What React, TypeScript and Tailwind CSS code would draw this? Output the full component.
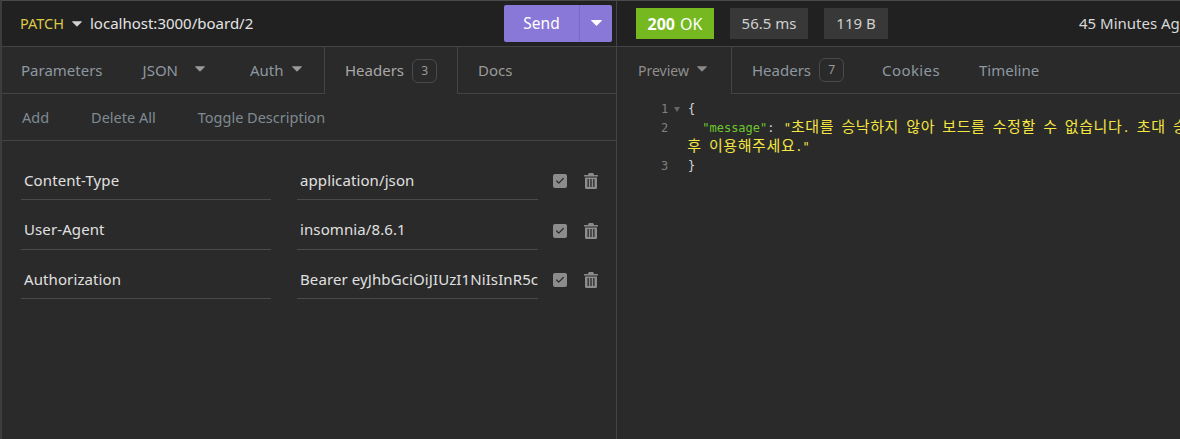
import { Check } from "lucide-react"

const font = { fontFamily: '"Noto Sans", sans-serif' }

function Caret({ className }: { className: string }) {
  return (
    <svg viewBox="0 0 11 6" className={className} fill="currentColor">
      <path d="M0 0.5 Q0 0 0.6 0 H10.4 Q11 0 11 0.5 L6 5.6 Q5.5 6 5 5.6 Z" />
    </svg>
  )
}

function Badge({ children }: { children: string }) {
  return (
    <span className="ml-[8px] flex h-[24px] w-[25px] shrink-0 items-center justify-center rounded-[6px] border border-[#4a4a4a] text-[12px] text-[#9a9a9a]">
      {children}
    </span>
  )
}

// body is filled, the three bars are cut out in the page colour
function TrashIcon() {
  return (
    <svg viewBox="0 0 14 16" className="ml-[17px] h-[16px] w-[14px] text-[#8c8c8c]" fill="currentColor">
      <path d="M4.5 0.5 Q4.7 0 5.2 0 H8.8 Q9.3 0 9.5 0.5 L10 2 H13.5 Q14 2 14 2.5 V3.5 H0 V2.5 Q0 2 0.5 2 H4 Z" />
      <path d="M1 4.5 H13 V14.5 Q13 16 11.5 16 H2.5 Q1 16 1 14.5 Z" />
      <path d="M3.5 6 H4.8 V14 H3.5 Z M6.35 6 H7.65 V14 H6.35 Z M9.2 6 H10.5 V14 H9.2 Z" fill="#2a2a2a" />
    </svg>
  )
}

const headers = [
  { name: "Content-Type", value: "application/json" },
  { name: "User-Agent", value: "insomnia/8.6.1" },
  { name: "Authorization", value: "Bearer eyJhbGciOiJIUzI1NiIsInR5c" },
]

function HeaderRow({ name, value }: { name: string; value: string }) {
  return (
    <div className="flex h-[49.5px] items-start tracking-[0.1px]">
      <div className="ml-[19px] flex h-[39px] w-[250px] items-center border-b border-[#4a4a4a] pl-[3px] text-[15px] text-[#e0e0e0]">
        {name}
      </div>
      <div className="ml-[26px] flex h-[39px] w-[241px] items-center overflow-hidden border-b border-[#4a4a4a] pl-[3px] text-[15px] whitespace-nowrap text-[#e0e0e0]">
        {value}
      </div>
      <div className="ml-[15px] flex h-[39px] items-center pt-[1px]">
        <span className="flex h-[14px] w-[14px] items-center justify-center rounded-[2px] bg-[#8c8c8c]">
          <Check className="h-[10px] w-[10px] text-[#2a2a2a]" strokeWidth={3} />
        </span>
        <TrashIcon />
      </div>
    </div>
  )
}

function K({ children }: { children: string }) {
  return <span className="text-[15px] tracking-[0.6px]">{children}</span>
}

export default function App() {
  return (
    <div
      style={font}
      className="flex h-[439px] w-[1180px] overflow-hidden border-t border-l-2 border-[#4a4a4a] border-l-[#3d3d3d] bg-[#2a2a2a]"
    >
      {/* Request pane */}
      <div className="flex w-[615px] shrink-0 flex-col border-r border-[#444]">
        <div className="flex h-[46px] shrink-0 items-center border-b border-[#444] bg-[#212121]">
          <span className="ml-[18px] text-[14.5px] text-[#dcc84a]">PATCH</span>
          <Caret className="ml-[8px] h-[6px] w-[10px] text-[#d0d0d0]" />
          <span className="ml-[8px] text-[15px] text-[#e4e4e4]">localhost:3000/board/2</span>
          <div className="mt-[-1px] ml-auto mr-[4px] flex h-[37px] w-[108px] items-center rounded-[2px] bg-[#8a78d8] text-white">
            <span className="flex w-[75px] justify-center pt-[2px] text-[15.5px]">Send</span>
            <span className="flex h-full flex-1 items-center justify-center border-l border-[#7c6bc6]">
              <Caret className="h-[6px] w-[11px]" />
            </span>
          </div>
        </div>

        <div className="flex h-[47px] shrink-0 items-center border-b border-[#444] text-[15px] text-[#8e98a0]">
          <div className="flex h-full w-[323px] items-center border-r border-[#444]">
            <span className="ml-[19px]">Parameters</span>
            <span className="ml-[40px]">JSON</span>
            <Caret className="ml-[17px] mb-[3px] h-[6px] w-[10px] text-[#9a9a9a]" />
            <span className="ml-[45px]">Auth</span>
            <Caret className="ml-[8px] mb-[3px] h-[6px] w-[10px] text-[#9a9a9a]" />
          </div>
          <div className="-mb-[1px] flex h-[47px] w-[133px] items-center border-r border-[#444] bg-[#2a2a2a] pl-[20px] text-[#a8a8a8]">
            Headers
            <Badge>3</Badge>
          </div>
          <span className="ml-[20px] text-[#9a9a9a]">Docs</span>
        </div>

        <div className="flex h-[47px] shrink-0 items-center border-b border-[#444] pt-[1px] text-[14.5px] text-[#7f8a93]">
          <span className="ml-[20px]">Add</span>
          <span className="ml-[42px]">Delete All</span>
          <span className="ml-[42px]">Toggle Description</span>
        </div>

        <div className="pt-[20px]">
          {headers.map((h) => (
            <HeaderRow key={h.name} name={h.name} value={h.value} />
          ))}
        </div>
      </div>

      {/* Response pane */}
      <div className="flex min-w-0 flex-1 flex-col">
        <div className="flex h-[46px] shrink-0 items-center border-b border-[#444] bg-[#212121] pl-[19px] whitespace-nowrap">
          <span className="flex h-[31px] w-[78px] shrink-0 items-center justify-center bg-[#75b820] text-[16px] text-white">
            <b className="mr-[5px] font-bold">200</b>OK
          </span>
          <span className="ml-[16px] flex h-[31px] w-[78px] shrink-0 items-center justify-center bg-[#383838] text-[15px] text-[#d0d0d0]">
            56.5 ms
          </span>
          <span className="ml-[16px] flex h-[31px] w-[64px] shrink-0 items-center justify-center bg-[#383838] text-[15px] text-[#d0d0d0]">
            119 B
          </span>
          <span className="ml-[191px] shrink-0 text-[15px] text-[#d8d8d8]">45 Minutes Ago</span>
        </div>

        <div className="flex h-[47px] shrink-0 items-center border-b border-[#444] text-[15px] text-[#8e98a0]">
          <div className="-mb-[1px] flex h-[47px] w-[115px] shrink-0 items-center border-r border-[#444] bg-[#2a2a2a] pl-[21px] text-[14px] text-[#8f8f8f]">
            Preview
            <Caret className="mb-[3px] ml-[8px] h-[6px] w-[10px] text-[#8a8a8a]" />
          </div>
          <span className="ml-[20px]">Headers</span>
          <Badge>7</Badge>
          <span className="ml-[38px] tracking-[0.4px]">Cookies</span>
          <span className="ml-[39px]">Timeline</span>
        </div>

        <div
          className="pt-[6px] text-[12px] leading-[19px]"
          style={{ fontFamily: '"DejaVu Sans Mono", "Noto Sans CJK KR", monospace' }}
        >
          <div className="flex h-[19px]">
            <span className="ml-[44px] w-[8px] text-[#808080]">1</span>
            <svg viewBox="0 0 6 5" className="mt-[7px] ml-[5px] h-[5px] w-[6px] text-[#666]" fill="currentColor">
              <path d="M0 0H6L3 5Z" />
            </svg>
            <span className="ml-[8px] text-[#d8d8d8]">{"{"}</span>
          </div>
          <div className="flex h-[38px]">
            <span className="ml-[44px] w-[8px] text-[#808080]">2</span>
            <div className="-mt-[1px] ml-[19px] w-[600px] whitespace-nowrap">
              <div className="h-[19px]">
                <span className="ml-[15px] text-[#6cc72c]">"message"</span>
                <span className="text-[#d8d8d8]">: </span>
                <span className="ml-[2px] text-[#f5e642]">
                  "<K>초대를</K> <K>승낙하지</K> <K>않아</K> <K>보드를</K> <K>수정할</K> <K>수</K> <K>없습니다</K>. <K>초대</K> <K>승낙</K>
                </span>
              </div>
              <div className="h-[19px] text-[#f5e642]">
                <K>후</K> <K>이용해주세요</K>."
              </div>
            </div>
          </div>
          <div className="flex h-[19px]">
            <span className="ml-[44px] w-[8px] text-[#808080]">3</span>
            <span className="ml-[19px] text-[#d8d8d8]">{"}"}</span>
          </div>
        </div>
      </div>
    </div>
  )
}
